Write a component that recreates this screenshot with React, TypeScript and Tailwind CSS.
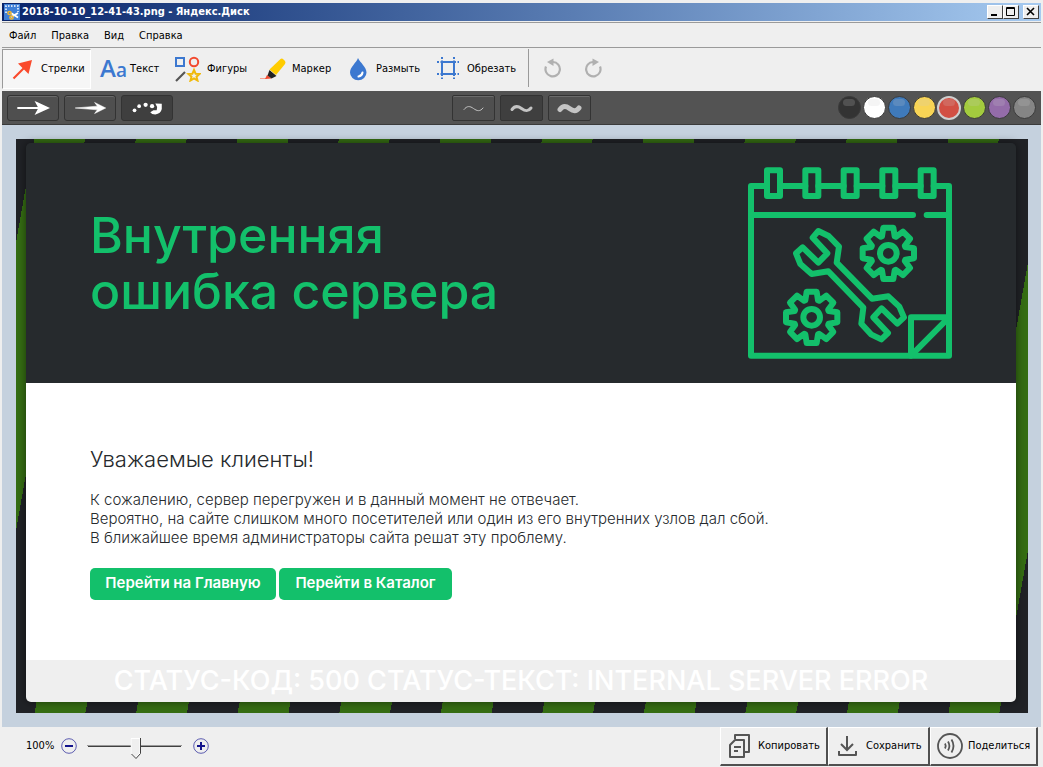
import { useState } from "react";
import type { ReactNode } from "react";
import clsx from "clsx";

const MENU = ["Файл", "Правка", "Вид", "Справка"];

const COLORS = [
    { name: "Чёрный", className: "bg-[#333333]" },
    { name: "Белый", className: "bg-white" },
    { name: "Синий", className: "bg-[#3f7abb]" },
    { name: "Жёлтый", className: "bg-[#f8d455]" },
    { name: "Красный", className: "bg-[#d24f43]" },
    { name: "Зелёный", className: "bg-[#a3cb3e]" },
    { name: "Фиолетовый", className: "bg-[#946ca9]" },
    { name: "Серый", className: "bg-[#858585]" },
];

const RINGS = [99, 214, 329, 445, 560];
const GEAR_ANGLES = [0, 45, 90, 135, 180, 225, 270, 315];

const gearPoints = (cx: number, cy: number) =>
    GEAR_ANGLES.flatMap((deg) => {
        const a = (deg * Math.PI) / 180;
        return [[-19, -51], [-15, -77], [15, -77], [19, -51]].map(([x, y]) => {
            const px = cx + x * Math.cos(a) - y * Math.sin(a);
            const py = cy + x * Math.sin(a) + y * Math.cos(a);
            return `${px.toFixed(1)},${py.toFixed(1)}`;
        });
    }).join(" ");

const Gear = ({ cx, cy }: { cx: number; cy: number }) => (
    <>
        <polygon points={gearPoints(cx, cy)} />
        <circle cx={cx} cy={cy} r="25" />
    </>
);

const MaintenanceIcon = () => (
    <svg viewBox="42 36 612 576" className="h-48 w-[204px] shrink-0" fill="none" stroke="#13c06b" strokeWidth="18" strokeLinecap="round" strokeLinejoin="round">
        {RINGS.map((x) => (
            <rect key={x} x={x} y="46" width="39" height="77" />
        ))}
        <path d="M99 93H51V602H645V93H599M138 93H214M253 93H329M368 93H445M484 93H560" />
        <path d="M51 180H537M578 180H645" />
        <path d="M645 487H531V602L645 487" />
        <path d="M253 228L236 248L280 295L253 323L206 277L186 295L199 327L233 357L283 349L388 458L382 506L411 538L442 553L462 534L418 487L443 460L490 506L510 487L496 455L463 424L414 431L308 323L315 275L284 243Z" />
        <Gear cx={463} cy={295} />
        <Gear cx={233} cy={487} />
    </svg>
);

const AppIcon = () => (
    <svg viewBox="0 0 16 16" className="h-4 w-4 shrink-0">
        <rect width="16" height="16" fill="#3f7fd6" />
        <path d="M2 9V2H14V8" fill="none" stroke="#fff" strokeWidth="1.5" strokeDasharray="1.5 1.5" />
        <path d="M7 9L14 13.500M14 9L7 13" stroke="#fff" strokeWidth="1.800" />
        <circle cx="5.500" cy="9" r="1.600" fill="none" stroke="#f3b52c" strokeWidth="1.500" />
        <circle cx="7.500" cy="13.500" r="1.600" fill="none" stroke="#f3b52c" strokeWidth="1.500" />
    </svg>
);

const ArrowIcon = () => (
    <svg viewBox="0 0 24 24" className="h-6 w-6 shrink-0">
        <path d="M2.500 21.500L15 9" stroke="#fa4a2c" strokeWidth="2.200" />
        <path d="M21 3L7 6.500L17.500 17Z" fill="#fa4a2c" />
    </svg>
);

const ShapesIcon = () => (
    <svg viewBox="0 0 26 26" className="h-[26px] w-[26px] shrink-0" fill="none">
        <rect x="1" y="2" width="8" height="8" stroke="#3c78d0" strokeWidth="2" />
        <circle cx="19" cy="6" r="4.200" stroke="#f2492e" strokeWidth="2" />
        <path d="M1 25L10 16" stroke="#555" strokeWidth="2.200" />
        <path d="M19 14L20.600 17.700L24.500 18L21.500 20.700L22.500 24.500L19 22.400L15.500 24.500L16.500 20.700L13.500 18L17.400 17.700Z" stroke="#f0b90b" strokeWidth="2" />
    </svg>
);

const MarkerIcon = () => (
    <svg viewBox="0 0 26 24" className="h-6 w-[26px] shrink-0">
        <path d="M-1 21.500H7" stroke="#f9a090" strokeWidth="1" />
        <path d="M5 22L7 18L11.500 21.500Z" fill="#f2492e" />
        <path d="M7.500 18.500L9.500 13L16.500 19L11.500 21.500Z" fill="#222" />
        <path d="M9.500 12.500L20.500 2Q22 1 23.500 2.500L25 4Q26 5.500 25 7L16 18Z" fill="#ffcc00" />
    </svg>
);

const DropIcon = () => (
    <svg viewBox="0 0 20 24" className="h-6 w-5 shrink-0">
        <path d="M8 1C10 5.500 16.500 10 16.500 15.500A8 7.500 0 0 1 0 15.500C0 10 6.500 5.500 8 1Z" fill="#3c78d0" />
        <path d="M12.500 15.500Q12 19 8.500 19.500" fill="none" stroke="#fff" strokeWidth="2" strokeLinecap="round" />
    </svg>
);

const CropIcon = () => (
    <svg viewBox="0 0 24 24" className="h-6 w-6 shrink-0" fill="none" stroke="#3c78d0" strokeWidth="2">
        <rect x="5" y="5" width="12" height="12" />
        <path d="M5 0V5M17 0V5M5 17V22M17 17V22M0 5H5M0 17H5M17 5H22M17 17H22" strokeDasharray="2 1.500" />
    </svg>
);

const RotateIcon = ({ flip = false }: { flip?: boolean }) => (
    <svg viewBox="0 0 20 20" className={clsx("h-5 w-5", flip && "-scale-x-100")}>
        <path d="M3 8.500A7.200 7.200 0 1 0 10 4" fill="none" stroke="#b0b0b0" strokeWidth="2.200" />
        <path d="M4 4L10.500 .500V8Z" fill="#b0b0b0" />
    </svg>
);

const CopyIcon = () => (
    <svg viewBox="0 0 26 26" className="h-[26px] w-[26px] shrink-0" fill="none" stroke="#555" strokeWidth="2">
        <path d="M8 6V2H22V19H18" strokeLinejoin="round" />
        <path d="M8 7H17V24H3V12Z" strokeLinejoin="round" />
        <path d="M7 14H14M7 18H11" />
    </svg>
);

const SaveIcon = () => (
    <svg viewBox="0 0 26 26" className="h-[26px] w-[26px] shrink-0" fill="none" stroke="#555" strokeWidth="2">
        <path d="M12 3V17M6 11L12 17L18 11" />
        <path d="M4 18V22H21V18" strokeLinejoin="round" />
    </svg>
);

const ShareIcon = () => (
    <svg viewBox="0 0 26 26" className="h-[26px] w-[26px] shrink-0" fill="none" stroke="#555" strokeWidth="1.800">
        <circle cx="13" cy="13" r="12" />
        <path d="M8 10.500Q9.500 13 8 15.500M11 8.500Q13.800 13 11 17.500M14.500 6.500Q18.500 13 14.500 19.500" />
    </svg>
);

const ZoomIcon = ({ plus = false }: { plus?: boolean }) => (
    <svg viewBox="0 0 16 16" className="h-4 w-4" fill="none" stroke="#14148c">
        <circle cx="8" cy="8" r="7.300" stroke="#5d5db0" />
        <path d={plus ? "M4 8H12M8 4V12" : "M4 8H12"} strokeWidth="2" />
    </svg>
);

const BRUSHES = [
    {
        label: "Стрелка",
        icon: <path d="M8 13H32M29 7.500L41 13L29 18.500L32 13Z" fill="#fff" stroke="#fff" strokeWidth="2" />,
    },
    {
        label: "Клиновидная стрелка",
        icon: <path d="M9 13L33 11L30 7L42 13L30 19L33 15Z" fill="#fff" stroke="#fff" strokeWidth=".600" />,
    },
    {
        label: "Произвольная стрелка",
        icon: (
            <g fill="#fff">
                <circle cx="11.500" cy="15.500" r="2" />
                <circle cx="16.500" cy="11" r="2" />
                <circle cx="23.500" cy="9.500" r="2.300" />
                <circle cx="30.500" cy="11" r="2.300" />
                <path d="M34 8L41 8.500V14Q40 19 34 20Q30 20 28.500 17.500L32 15.500L35.500 15.500L36 12Z" />
            </g>
        ),
    },
];

const WIDTHS = [
    { label: "Тонкая", stroke: 1 },
    { label: "Средняя", stroke: 3 },
    { label: "Толстая", stroke: 5 },
];

type ToolButtonProps = {
    icon: ReactNode;
    label: string;
    className: string;
    active?: boolean;
};

const ToolButton = ({ icon, label, className, active = false }: ToolButtonProps) => (
    <button
        className={clsx(
            "flex h-10 items-center gap-1.5 border px-2 whitespace-nowrap",
            active ? "border-t-[#9a9a9a] border-l-[#9a9a9a] border-r-white border-b-white bg-[#f6f6f6]" : "border-transparent",
            className
        )}
    >
        {icon}
        <span>{label}</span>
    </button>
);

const WindowButton = ({ label, children }: { label: string; children: ReactNode }) => (
    <button aria-label={label} className="h-3.5 w-4 border border-t-white border-r-[#404040] border-b-[#404040] border-l-white bg-[#efefef]">
        <svg viewBox="0 0 14 12" className="h-3 w-3.5" fill="none" stroke="#000">{children}</svg>
    </button>
);

const FooterButton = ({ icon, label, className }: { icon: ReactNode; label: string; className: string }) => (
    <button className={clsx("flex h-[39px] items-center gap-[5px] border-t border-r-2 border-b-2 border-l border-t-white border-r-[#505050] border-b-[#505050] border-l-white px-1.5 whitespace-nowrap", className)}>
        {icon}
        <span>{label}</span>
    </button>
);

const ErrorPage = () => (
    <div className="bg-[repeating-linear-gradient(100deg,#202226_0px,#202226_18px,#356d13_18px,#356d13_68px,#202226_68px,#202226_100px)] pt-1 pr-3 pb-[11px] pl-2.5">
        <div className="overflow-hidden rounded-[5px] font-['Inter','Open_Sans',sans-serif] shadow-[0_0_8px_rgba(0,0,0,0.5)]">
            <header className="flex h-60 items-center justify-between bg-[#262a2d] px-16">
                <h1 className="text-[50px] leading-[56px] font-medium text-[#13c06b]">
                    Внутренняя<br />ошибка сервера
                </h1>
                <MaintenanceIcon />
            </header>
            <main className="bg-white px-16 pt-16 pb-[60px] text-[#262a2d]">
                <h2 className="text-[22px] leading-6 font-light">Уважаемые клиенты!</h2>
                <p className="mt-[19px] text-[15px] leading-[19px] font-light">
                    К сожалению, сервер перегружен и в данный момент не отвечает.<br />
                    Вероятно, на сайте слишком много посетителей или один из его внутренних узлов дал сбой.<br />
                    В ближайшее время администраторы сайта решат эту проблему.
                </p>
                <div className="mt-[21px] flex gap-[3px] text-[15px] leading-[30px] font-semibold text-white">
                    <a href="#home" className="h-8 w-[186px] rounded-[5px] bg-[#13c06b] text-center whitespace-nowrap">Перейти на Главную</a>
                    <a href="#catalog" className="h-8 w-[173px] rounded-[5px] bg-[#13c06b] text-center whitespace-nowrap">Перейти в Каталог</a>
                </div>
            </main>
            <footer className="bg-[#efefef] text-center text-[27px] leading-[42px] font-medium whitespace-nowrap text-white">
                СТАТУС-КОД: 500 СТАТУС-ТЕКСТ: INTERNAL SERVER ERROR
            </footer>
        </div>
    </div>
);

export default function App() {
    const [brush, setBrush] = useState(2);
    const [width, setWidth] = useState(1);
    const [color, setColor] = useState(4);
    const [zoom, setZoom] = useState(100);

    return (
        <div className="flex min-h-screen flex-col bg-[#efefef] px-0.5 pt-[3px] font-['DejaVu_Sans_Condensed','DejaVu_Sans',sans-serif] text-[11px] text-black">
            <div className="flex h-[18px] items-center gap-0.5 bg-linear-to-r from-[#0a246a] to-[#a6caf0] px-0.5 font-bold text-white">
                <AppIcon />
                <h1 className="grow">2018-10-10_12-41-43.png - Яндекс.Диск</h1>
                <div className="mr-0.5 flex">
                    <WindowButton label="Свернуть"><path d="M3 9H9" strokeWidth="2" /></WindowButton>
                    <WindowButton label="Развернуть"><path d="M2.500 1.500H10.500V9.500H2.500ZM2.500 2.500H10.500" /></WindowButton>
                </div>
                <WindowButton label="Закрыть"><path d="M3 2L10 9M10 2L3 9" strokeWidth="1.600" /></WindowButton>
            </div>

            <nav className="mt-px flex h-[25px] items-center gap-[15px] border-t border-[#9a9a9a] px-[7px] pt-0.5">
                {MENU.map((item) => (
                    <button key={item}>{item}</button>
                ))}
            </nav>

            <div className="flex h-11 items-start border-t border-[#9a9a9a] pt-px">
                <ToolButton active icon={<ArrowIcon />} label="Стрелки" className="w-[89px]" />
                <ToolButton
                    icon={<span aria-hidden="true" className="w-6 font-['Open_Sans',sans-serif] text-[24px] leading-6 font-semibold text-[#3c78d0]">A<span className="text-[19px]">a</span></span>}
                    label="Текст"
                    className="w-[75px]"
                />
                <ToolButton icon={<ShapesIcon />} label="Фигуры" className="w-[85px]" />
                <ToolButton icon={<MarkerIcon />} label="Маркер" className="w-[90px]" />
                <ToolButton icon={<DropIcon />} label="Размыть" className="w-[87px]" />
                <ToolButton icon={<CropIcon />} label="Обрезать" className="w-[100px]" />
                <div className="flex h-[38px] items-center gap-5 border-l border-[#9a9a9a] pl-3.5">
                    <button aria-label="Отменить"><RotateIcon /></button>
                    <button aria-label="Повторить"><RotateIcon flip /></button>
                </div>
            </div>

            <div className="grid h-[34px] grid-cols-3 items-center border-b border-[#3a3a3a] bg-[#535353] px-[5px]">
                <div className="flex gap-[5px]">
                    {BRUSHES.map(({ label, icon }, i) => (
                        <button
                            key={label}
                            aria-label={label}
                            onClick={() => setBrush(i)}
                            className={clsx("h-[26px] w-[52px] rounded-[3px] border border-[#333]", brush === i ? "bg-[#3f3f3f]" : "bg-[#4f4f4f] shadow-[inset_0_1px_0_#6a6a6a]")}
                        >
                            <svg viewBox="0 0 50 26" className="h-6 w-full">{icon}</svg>
                        </button>
                    ))}
                </div>
                <div className="flex justify-center gap-[5px]">
                    {WIDTHS.map(({ label, stroke }, i) => (
                        <button
                            key={label}
                            aria-label={label}
                            onClick={() => setWidth(i)}
                            className={clsx("h-[26px] w-[43px] rounded-[2px] border border-[#333]", width === i ? "bg-[#3f3f3f]" : "bg-[#4f4f4f] shadow-[inset_0_1px_0_#6a6a6a]")}
                        >
                            <svg viewBox="0 0 41 24" className="h-6 w-full">
                                <path d="M11 13.500C14 9.500 17 10 20.500 12.500C24 15 27 16 30 12" fill="none" stroke="#c4c4c4" strokeWidth={stroke} strokeLinecap="round" />
                            </svg>
                        </button>
                    ))}
                </div>
                <div className="flex justify-end gap-px">
                    {COLORS.map((c, i) => (
                        <label key={c.name} className="relative flex h-6 w-6 items-center justify-center">
                            <input
                                type="radio"
                                name="color"
                                aria-label={c.name}
                                checked={color === i}
                                onChange={() => setColor(i)}
                                className={clsx("h-[23px] w-[23px] appearance-none rounded-full border border-[#3a3a3a] checked:h-6 checked:w-6 checked:border-2 checked:border-[#cfcfcf]", c.className)}
                            />
                            <span className="pointer-events-none absolute top-[3px] left-1.5 h-[7px] w-3 rounded-full bg-[#cccccc]/20" />
                        </label>
                    ))}
                </div>
            </div>

            <div className="grow bg-[#c5d1de] py-3.5 pr-[13px] pl-3.5">
                <ErrorPage />
            </div>

            <div className="flex h-10 items-start justify-between pr-[3px] pl-6">
                <div className="flex h-[38px] items-center">
                    <label htmlFor="zoom" className="w-[35px]">{zoom}%</label>
                    <button aria-label="Уменьшить"><ZoomIcon /></button>
                    <div className="relative mx-2.5 h-6 w-24">
                        <svg viewBox="0 0 96 24" className="h-6 w-full">
                            <path d="M0 11.500H95" stroke="#9a9a9a" />
                            <path d="M1 12.500H94" stroke="#404040" />
                        </svg>
                        <svg viewBox="0 0 11 22" className="absolute top-1 h-[22px] w-[11px] -translate-x-1/2" style={{ left: `${(zoom - 10) * 0.5 + 6}%` }}>
                            <path d="M.500 .500H9.500V15L5 20L.500 15.500Z" fill="#efefef" stroke="#fff" />
                            <path d="M10 0V15.500L5.500 20.500L1 16" fill="none" stroke="#404040" />
                        </svg>
                        <input id="zoom" type="range" min="10" max="190" value={zoom} onChange={(e) => setZoom(Number(e.target.value))} className="absolute inset-0 w-full opacity-0" />
                    </div>
                    <button aria-label="Увеличить"><ZoomIcon plus /></button>
                </div>
                <div className="flex">
                    <FooterButton icon={<CopyIcon />} label="Копировать" className="w-[108px]" />
                    <FooterButton icon={<SaveIcon />} label="Сохранить" className="w-[102px]" />
                    <FooterButton icon={<ShareIcon />} label="Поделиться" className="w-[108px]" />
                </div>
            </div>
        </div>
    );
}
